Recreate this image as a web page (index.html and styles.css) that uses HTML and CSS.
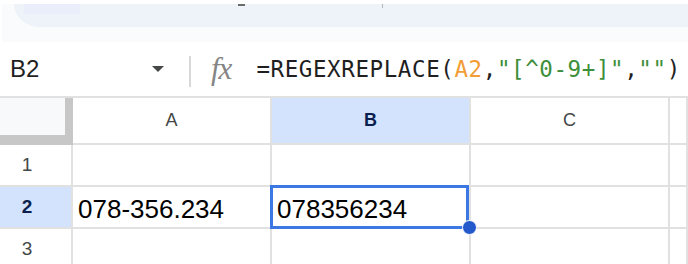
FILE: index.html
```html
<!DOCTYPE html>
<html lang="en">
<head>
  <meta charset="UTF-8">
  <title>Sheet - REGEXREPLACE</title>
  <link rel="stylesheet" href="styles.css">
</head>
<body>
  <div class="topbar">
    <div class="strip">
      <div class="toolbar">
        <span class="chip"></span>
        <span class="mark"></span>
        <span class="tick"></span>
      </div>
    </div>
  </div>

  <div class="formula-bar">
    <div class="name-box">B2</div>
    <span class="caret"></span>
    <span class="divider"></span>
    <span class="fx">fx</span>
    <div class="formula">=REGEXREPLACE(<span class="ref">A2</span>,<span class="str">"[^0-9+]"</span>,<span class="str">""</span>)</div>
  </div>

  <div class="grid">
    <div class="corner"></div>
    <div class="col-head">A</div>
    <div class="col-head active">B</div>
    <div class="col-head">C</div>
    <div class="col-head"></div>

    <div class="row-head">1</div>
    <div class="cell"></div>
    <div class="cell"></div>
    <div class="cell"></div>
    <div class="cell"></div>

    <div class="row-head active">2</div>
    <div class="cell">078-356.234</div>
    <div class="cell selected">078356234
      <span class="selection"></span>
      <span class="handle"></span>
    </div>
    <div class="cell"></div>
    <div class="cell"></div>

    <div class="row-head">3</div>
    <div class="cell"></div>
    <div class="cell"></div>
    <div class="cell"></div>
    <div class="cell"></div>
  </div>
</body>
</html>
```

FILE: styles.css
```css
body {
  margin: 0;
  width: 688px;
  height: 264px;
  overflow: hidden;
  background: #fff;
  font-family: "Liberation Sans", Arial, sans-serif;
}

/* top chrome */
.topbar {
  height: 42px;
  padding-top: 4px;
  padding-left: 2px;
  box-sizing: border-box;
}
.strip {
  height: 38px;
  background: #f9fbfd;
}
.toolbar {
  margin-left: 12px;
  height: 23px;
  background: #eef2f9;
  border-bottom-left-radius: 26px 23px;
  display: flex;
  align-items: flex-start;
}
.chip {
  margin-left: 10px;
  width: 56px;
  height: 10px;
  background: #e9eefa;
}
.mark {
  margin-left: 158px;
  width: 7px;
  height: 2px;
  background: #6b6b6b;
}
.tick {
  margin-left: 137px;
  width: 1px;
  height: 4px;
  background: #b5b5b5;
}

/* formula bar */
.formula-bar {
  height: 54px;
  display: flex;
  align-items: center;
}
.name-box {
  width: 140px;
  padding-left: 10px;
  font-size: 24px;
  color: #1f1f1f;
}
.caret {
  width: 0;
  height: 0;
  border-left: 6px solid transparent;
  border-right: 6px solid transparent;
  border-top: 6px solid #444746;
  margin-left: 2px;
}
.divider {
  width: 2px;
  height: 31px;
  margin-left: 25px;
  background: #d6d8da;
  align-self: flex-end;
  margin-bottom: 9px;
}
.fx {
  margin-left: 20px;
  font-family: "Liberation Serif", serif;
  font-style: italic;
  font-size: 31px;
  color: #858585;
  letter-spacing: -1px;
}
.formula {
  margin-left: 25px;
  font-family: "DejaVu Sans Mono", monospace;
  font-size: 22.5px;
  letter-spacing: 0.6px;
  color: #1f1f1f;
  white-space: nowrap;
}
.ref { color: #f29d38; }
.str { color: #3d8f3a; }

/* sheet grid */
.grid {
  display: grid;
  grid-template-columns: 73px 199px 199px 199px 1fr;
  grid-template-rows: 47px 42px 42px 42px;
  border-top: 2px solid #e1e1e1;
}
.grid > div {
  box-sizing: border-box;
  border-right: 2px solid #e1e1e1;
  border-bottom: 2px solid #e1e1e1;
}
.grid > .corner {
  background: #f8f9fa;
  border-right: 8px solid #c7c7c7;
  border-bottom: 10px solid #c7c7c7;
}
.col-head {
  display: flex;
  align-items: center;
  justify-content: center;
  font-size: 18px;
  color: #444746;
}
.row-head {
  display: flex;
  align-items: center;
  justify-content: center;
  padding-right: 17px;
  font-size: 19px;
  color: #444746;
}
.active {
  background: #d3e3fd;
  color: #0b1f4f;
  font-weight: bold;
}
.cell {
  padding: 0 5px;
  font-size: 26px;
  color: #000;
  line-height: 44px;
  white-space: nowrap;
}
.selected {
  position: relative;
}
.selection {
  position: absolute;
  left: -2px;
  top: -2px;
  right: 0;
  bottom: -2px;
  border: 3px solid #3b78e3;
}
.handle {
  position: absolute;
  right: -8px;
  bottom: -8px;
  width: 13px;
  height: 13px;
  border-radius: 50%;
  background: #2459cc;
  border: 1px solid #fff;
}
```
